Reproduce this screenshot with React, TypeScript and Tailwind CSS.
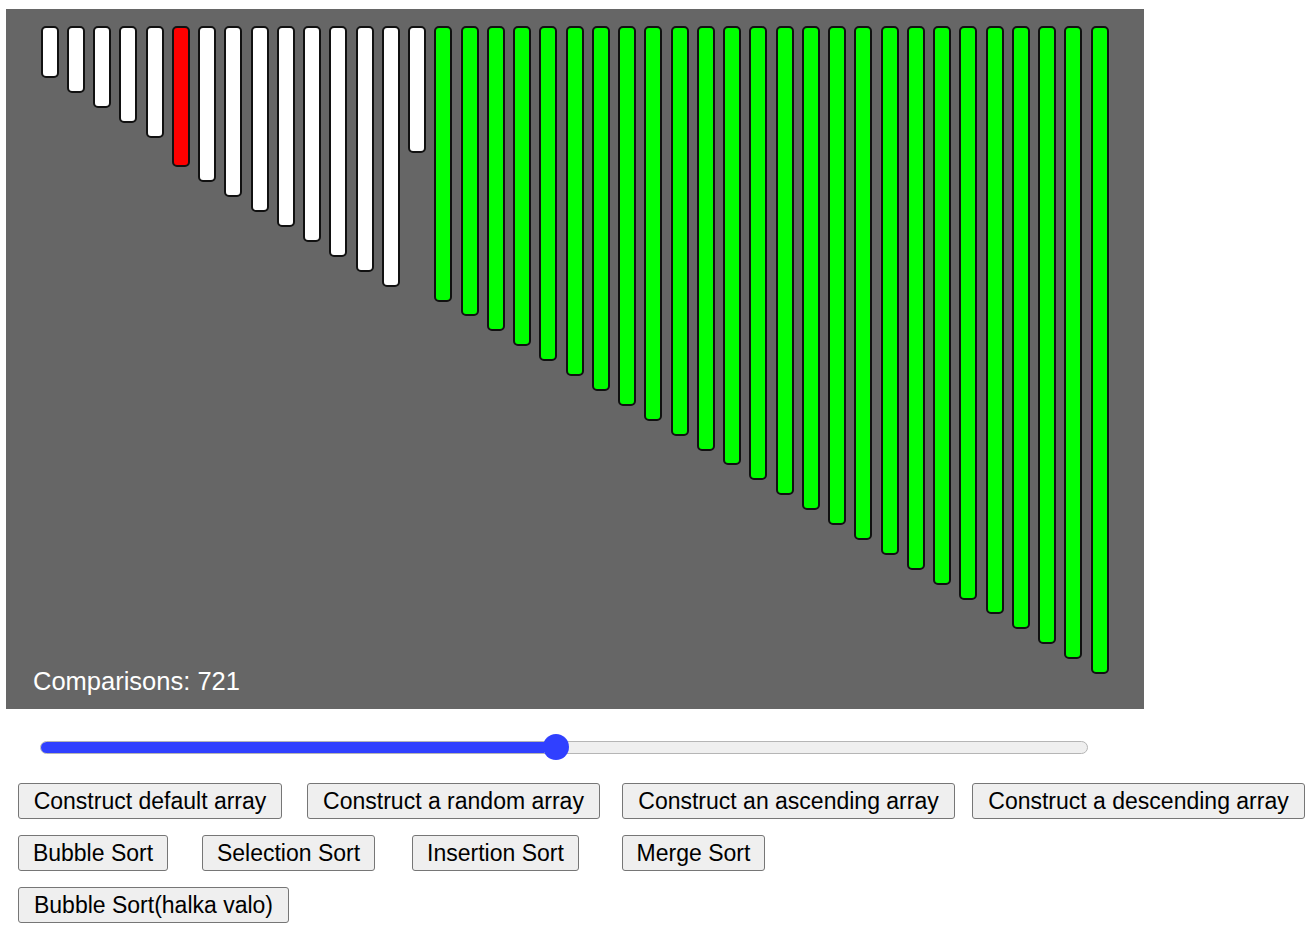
import React from "react";

const values = [1, 2, 3, 4, 5, 7, 8, 9, 10, 11, 12, 13, 14, 15, 6];
for (let v = 16; v <= 41; v++) values.push(v);

function barColor(i: number) {
  if (i === 5) return "bg-[#ff0000]";
  if (i < 15) return "bg-white";
  return "bg-[#00ff00]";
}

const rows: { label: string; w: string; ml: string }[][] = [
  [
    { label: "Construct default array", w: "w-[264px]", ml: "ml-[18px]" },
    { label: "Construct a random array", w: "w-[293px]", ml: "ml-[25px]" },
    { label: "Construct an ascending array", w: "w-[333px]", ml: "ml-[22px]" },
    { label: "Construct a descending array", w: "w-[333px]", ml: "ml-[17px]" },
  ],
  [
    { label: "Bubble Sort", w: "w-[150px]", ml: "ml-[18px]" },
    { label: "Selection Sort", w: "w-[173px]", ml: "ml-[34px]" },
    { label: "Insertion Sort", w: "w-[167px]", ml: "ml-[37px]" },
    { label: "Merge Sort", w: "w-[143px]", ml: "ml-[43px]" },
  ],
  [{ label: "Bubble Sort(halka valo)", w: "w-[271px]", ml: "ml-[18px]" }],
];

export default function App() {
  return (
    <div className="min-h-[933px] w-[1315px] bg-white font-['Liberation_Sans',Arial,sans-serif]">
      <div className="pt-[9px] pl-[6px]">
        <div className="w-[1138px] h-[700px] bg-[#666666] flex flex-col">
          <div className="flex-1 min-h-0 flex items-start gap-[8.26px] pl-[34.7px] pt-[17px]">
            {values.map((v, i) => (
              <div
                key={i}
                className={`w-[18px] shrink-0 box-border border-2 border-[#111] rounded-[5px] ${barColor(i)}`}
                style={{ height: 52 + (v - 1) * 14.9 }}
              />
            ))}
          </div>
          <div className="pl-[27px] pb-[15px] text-[25.5px] leading-[26px] text-white">
            Comparisons: 721
          </div>
        </div>
      </div>

      {/* speed slider */}
      <div className="pl-[40px] pt-[24px]">
        <div className="relative w-[1048px] h-[28px] flex items-center">
          <div className="w-full h-[13px] rounded-full bg-[#efefef] border border-[#b5b5b5] overflow-hidden">
            <div className="h-full w-[503px] bg-[#3040ff]" />
          </div>
          <div className="absolute left-[503px] top-[1px] w-[26px] h-[26px] rounded-full bg-[#3040ff]" />
        </div>
      </div>

      <div className="pt-[22px] flex flex-col gap-[16px]">
        {rows.map((row, r) => (
          <div key={r} className="flex">
            {row.map((b) => (
              <button
                key={b.label}
                className={`${b.ml} ${b.w} h-[36px] shrink-0 bg-[#efefef] border border-[#767676] rounded-[3px] text-[23px] leading-[26px] text-black whitespace-nowrap flex items-center justify-center`}
              >
                {b.label}
              </button>
            ))}
          </div>
        ))}
      </div>
    </div>
  );
}
